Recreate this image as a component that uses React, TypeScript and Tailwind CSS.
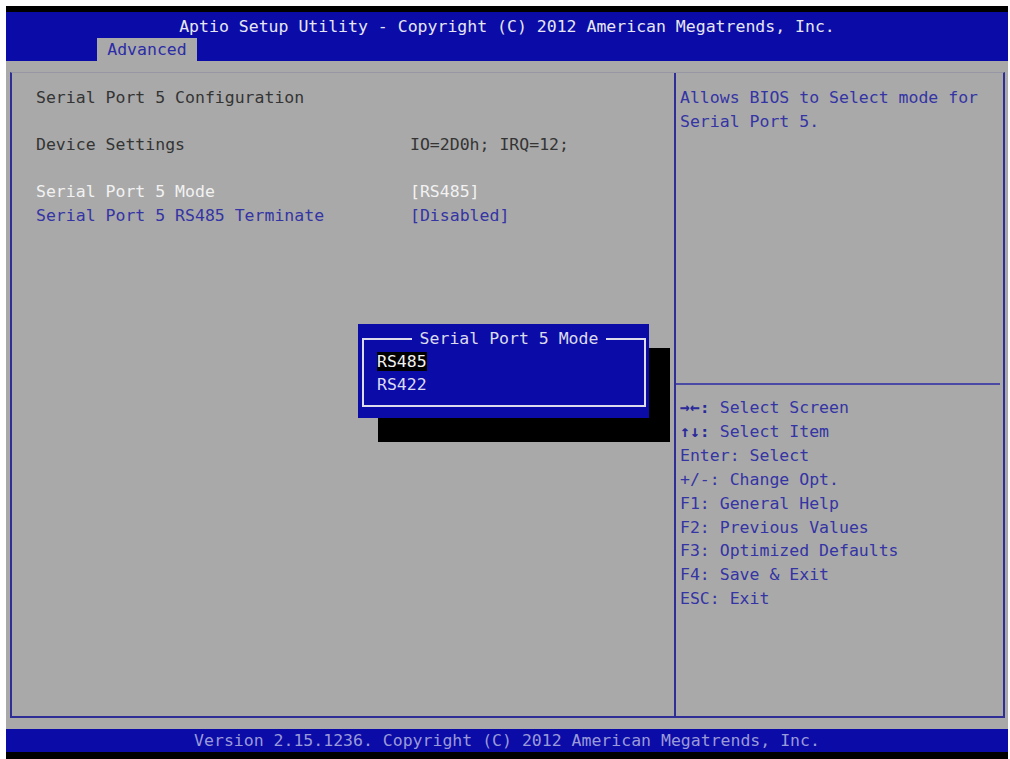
import React from "react";

const mono = { fontFamily: '"DejaVu Sans Mono", "Liberation Mono", monospace' };

const helpLines = [
  ["→←:", " Select Screen"],
  ["↑↓:", " Select Item"],
  ["Enter:", " Select"],
  ["+/-:", " Change Opt."],
  ["F1:", " General Help"],
  ["F2:", " Previous Values"],
  ["F3:", " Optimized Defaults"],
  ["F4:", " Save & Exit"],
  ["ESC:", " Exit"],
];

function Row({ label, value, tone }: { label: string; value?: string; tone: "dark" | "white" | "blue" }) {
  const color =
    tone === "white" ? "text-[#f2f2f2]" : tone === "blue" ? "text-[#3434a4]" : "text-[#343434]";
  return (
    <div className={`flex h-[23.6px] leading-[23.6px] ${color}`}>
      <span className="w-[374px] whitespace-pre">{label}</span>
      {value && <span className="whitespace-pre">{value}</span>}
    </div>
  );
}

export default function App() {
  return (
    <div
      className="w-[1010px] h-[759px] bg-white pl-[6px] pt-[6px] pr-[2px] overflow-hidden text-[16.5px]"
      style={mono}
    >
      <div className="relative w-[1002px] h-[753px] flex flex-col">
        <div className="h-[6px] bg-black" />

        {/* header */}
        <div className="h-[49px] bg-[#0b0ba8] flex flex-col">
          <div className="pt-[5px] h-[26px] leading-[20px] text-center text-[#e6e6f2] whitespace-pre">
            Aptio Setup Utility - Copyright (C) 2012 American Megatrends, Inc.
          </div>
          <div className="ml-[91px] w-[100px] h-[23px] bg-[#a9a9a9] text-[#2c2ca6] leading-[23px] text-center">
            Advanced
          </div>
        </div>

        {/* body */}
        <div className="h-[668px] bg-[#a9a9a9] pt-[11px] pl-[4px] pr-[3px] pb-[11px]">
          <div className="h-full flex border-l-2 border-r-2 border-b-2 border-t border-l-[#2e2e96] border-r-[#2e2e96] border-b-[#2e2e96] border-t-[#9696a4]">
            <div className="w-[662px] pl-[24px] pt-[13px]">
              <Row label="Serial Port 5 Configuration" tone="dark" />
              <div className="h-[23.6px]" />
              <Row label="Device Settings" value="IO=2D0h; IRQ=12;" tone="dark" />
              <div className="h-[23.6px]" />
              <Row label="Serial Port 5 Mode" value="[RS485]" tone="white" />
              <Row label="Serial Port 5 RS485 Terminate" value="[Disabled]" tone="blue" />
            </div>
            <div className="flex-1 border-l-2 border-[#2e2e96] flex flex-col">
              <div className="h-[310px] pl-[4px] pt-[13px] leading-[24px] text-[#3434a4]">
                <div className="whitespace-pre">Allows BIOS to Select mode for</div>
                <div className="whitespace-pre">Serial Port 5.</div>
              </div>
              <div className="h-[2px] bg-[#4a4aa4] mr-[3px]" />
              <div className="pl-[4px] pt-[11px] leading-[23.9px] text-[#3434a4]">
                {helpLines.map(([k, v]) => (
                  <div key={k} className="whitespace-pre">
                    <span className={k.startsWith("→") || k.startsWith("↑") ? "font-bold text-[#2a2a9a]" : ""}>
                      {k}
                    </span>
                    {v}
                  </div>
                ))}
              </div>
            </div>
          </div>
        </div>

        {/* footer */}
        <div className="h-[23px] bg-[#0b0ba8] text-center leading-[23px] text-[#9a9ad8] whitespace-pre">
          Version 2.15.1236. Copyright (C) 2012 American Megatrends, Inc.
        </div>
        <div className="h-[7px] bg-black" />

        {/* popup shadow */}
        <div className="absolute left-[372px] top-[342px] w-[292px] h-[94px] bg-black" />
        {/* popup */}
        <div className="absolute left-[352px] top-[318px] w-[291px] h-[94px] bg-[#0b0ba8] pl-[4px] pr-[3px] pt-[14px] pb-[11px]">
          <div className="relative h-full border-2 border-[#dcdcec] pl-[13px] pt-[10px]">
            <div className="absolute left-[10px] right-0 -top-[11px] flex justify-center leading-[20px]">
              <span className="bg-[#0b0ba8] px-[8px] text-[#dcdcec] whitespace-pre">Serial Port 5 Mode</span>
            </div>
            <div className="leading-[23px] text-[#f2f2f2]">
              <div>
                <span className="bg-black">RS485</span>
              </div>
              <div className="text-[#dcdcf0]">RS422</div>
            </div>
          </div>
        </div>
      </div>
    </div>
  );
}
